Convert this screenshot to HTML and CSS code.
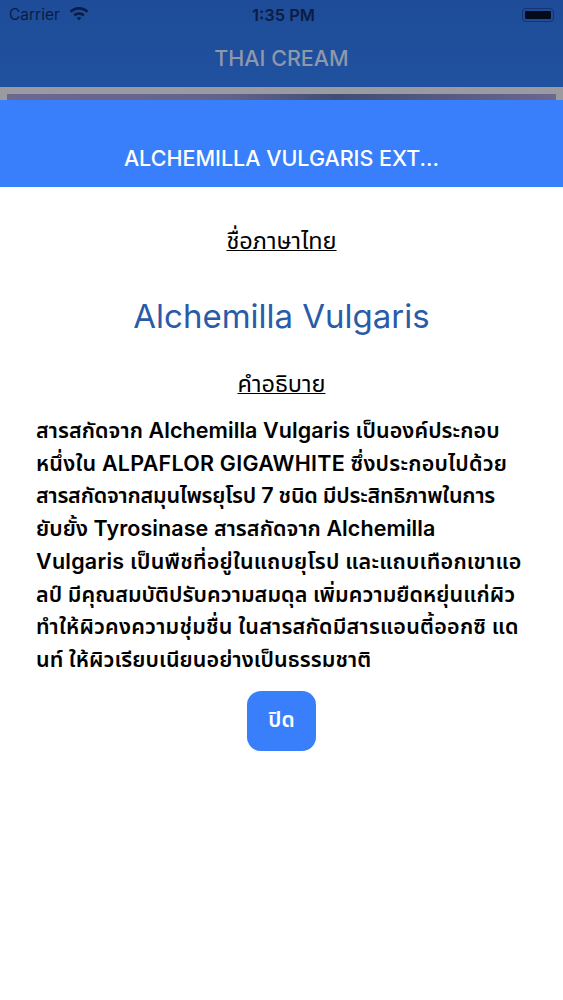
FILE: index.html
```html
<!DOCTYPE html>
<html lang="th">
<head>
<meta charset="utf-8">
<title>Thai Cream</title>
<link rel="stylesheet" href="styles.css">
</head>
<body>
<div class="screen">
  <header class="appbar">
    <div class="status">
      <div class="status-left">
        <span class="carrier">Carrier</span>
        <svg class="wifi" viewBox="0 0 20 15" width="20" height="15"><path d="M10 1C6.4 1 3.1 2.4.6 4.700l1.900 2C4.500 4.900 7.100 3.800 10 3.800s5.500 1.100 7.500 2.900l1.900-2C16.900 2.400 13.600 1 10 1z"/><path d="M10 6.200c-2.200 0-4.200.8-5.700 2.200l2 2.100c1-.9 2.300-1.400 3.700-1.400s2.700.5 3.700 1.400l2-2.100c-1.500-1.400-3.500-2.200-5.700-2.200z"/><path d="M10 11.100c-.9 0-1.700.3-2.300.9l2.300 2.500 2.300-2.500c-.6-.6-1.400-.9-2.300-.9z"/></svg>
      </div>
      <span class="clock">1:35 PM</span>
      <div class="battery"><span class="battery-fill"></span></div>
    </div>
    <div class="app-title">THAI CREAM</div>
  </header>
  <div class="backdrop"><div class="backdrop-inner"></div></div>
  <div class="modal-head"><span class="modal-title">ALCHEMILLA VULGARIS EXT...</span></div>
  <main class="modal-body">
    <h2 class="label label-first">ชื่อภาษาไทย</h2>
    <h1 class="name">Alchemilla Vulgaris</h1>
    <h2 class="label label-second">คำอธิบาย</h2>
    <p class="desc"><span class="fit-slight">สารสกัดจาก Alchemilla Vulgaris เป็นองค์ประกอบ</span><br><span class="fit-wide">หนึ่งใน ALPAFLOR GIGAWHITE ซึ่งประกอบไปด้วย</span><br><span class="fit-tight">สารสกัดจากสมุนไพรยุโรป 7 ชนิด มีประสิทธิภาพในการ</span><br><span class="fit-slight">ยับยั้ง Tyrosinase สารสกัดจาก Alchemilla</span><br><span class="fit-wide">Vulgaris เป็นพืชที่อยู่ในแถบยุโรป และแถบเทือกเขาแอ</span><br><span class="fit-slight">ลป์ มีคุณสมบัติปรับความสมดุล เพิ่มความยืดหยุ่นแก่ผิว</span><br><span class="fit-wide">ทำให้ผิวคงความชุ่มชื่น ในสารสกัดมีสารแอนตี้ออกซิ แด</span><br><span class="fit-slight">นท์ ให้ผิวเรียบเนียนอย่างเป็นธรรมชาติ</span></p>
    <button class="close">ปิด</button>
  </main>
</div>
</body>
</html>
```
FILE: styles.css
```css
* { box-sizing: border-box; margin: 0; padding: 0; }
html, body { background: #fff; }
body { font-family: Inter, "Noto Sans Thai", "Noto Sans", "Liberation Sans", sans-serif; }
.screen { width: 563px; height: 1000px; display: flex; flex-direction: column; overflow: hidden; }
.appbar { height: 87px; background: linear-gradient(#1e4c98, #20519f); flex: none; }
.status { height: 29px; padding: 0 9px; display: flex; align-items: center; justify-content: space-between; position: relative; color: #0b1c45; }
.status-left { display: flex; align-items: center; gap: 9px; }
.carrier { font-size: 15.500px; }
.wifi { fill: #0b1c45; margin-top: -2px; }
.clock { font-size: 16.500px; font-weight: 600; position: absolute; left: 0; right: 0; padding-left: 4px; text-align: center; }
.battery { width: 32px; height: 14px; border: 1px solid #16346f; border-radius: 4px; padding: 2px; }
.battery-fill { display: block; width: 100%; height: 100%; background: #050a1c; border-radius: 1px; }
.app-title { height: 58px; display: flex; align-items: center; justify-content: center; font-size: 21.500px; font-weight: 500; color: #8e98ab; }
.backdrop { height: 13px; background: #9b9b9f; padding: 7px 7px 0; flex: none; }
.backdrop-inner { height: 6px; background: linear-gradient(90deg, #6b6791, #62638c 40%, #3f4d76 60%, #6b6791); }
.modal-head { height: 87px; background: #397ffb; flex: none; display: flex; align-items: flex-end; justify-content: center; padding-bottom: 16px; }
.modal-title { color: #fff; font-size: 21.500px; font-weight: 500; }
.modal-body { flex: 1; display: flex; flex-direction: column; align-items: center; padding: 0 36px; color: #000; }
.label { font-size: 23.500px; font-weight: 400; text-decoration: underline; text-decoration-thickness: 1px; line-height: 28px; }
.label-first { margin-top: 40px; }
.name { font-size: 33px; font-weight: 400; color: #295ba8; line-height: 40px; margin-top: 41px; }
.label-second { margin-top: 34px; }
.desc { align-self: stretch; margin-top: 16px; font-size: 21.500px; font-weight: 600; line-height: 32.700px; white-space: nowrap; }
.fit-slight { letter-spacing: 0.08px; }
.fit-wide { letter-spacing: 0.24px; }
.fit-tight { letter-spacing: -0.2px; }
.close { margin-top: 15px; width: 69px; height: 60px; border: 0; border-radius: 14px; background: #397ffb; color: #fff; font: 600 21px Inter, "Noto Sans Thai", "Noto Sans", sans-serif; }
```
